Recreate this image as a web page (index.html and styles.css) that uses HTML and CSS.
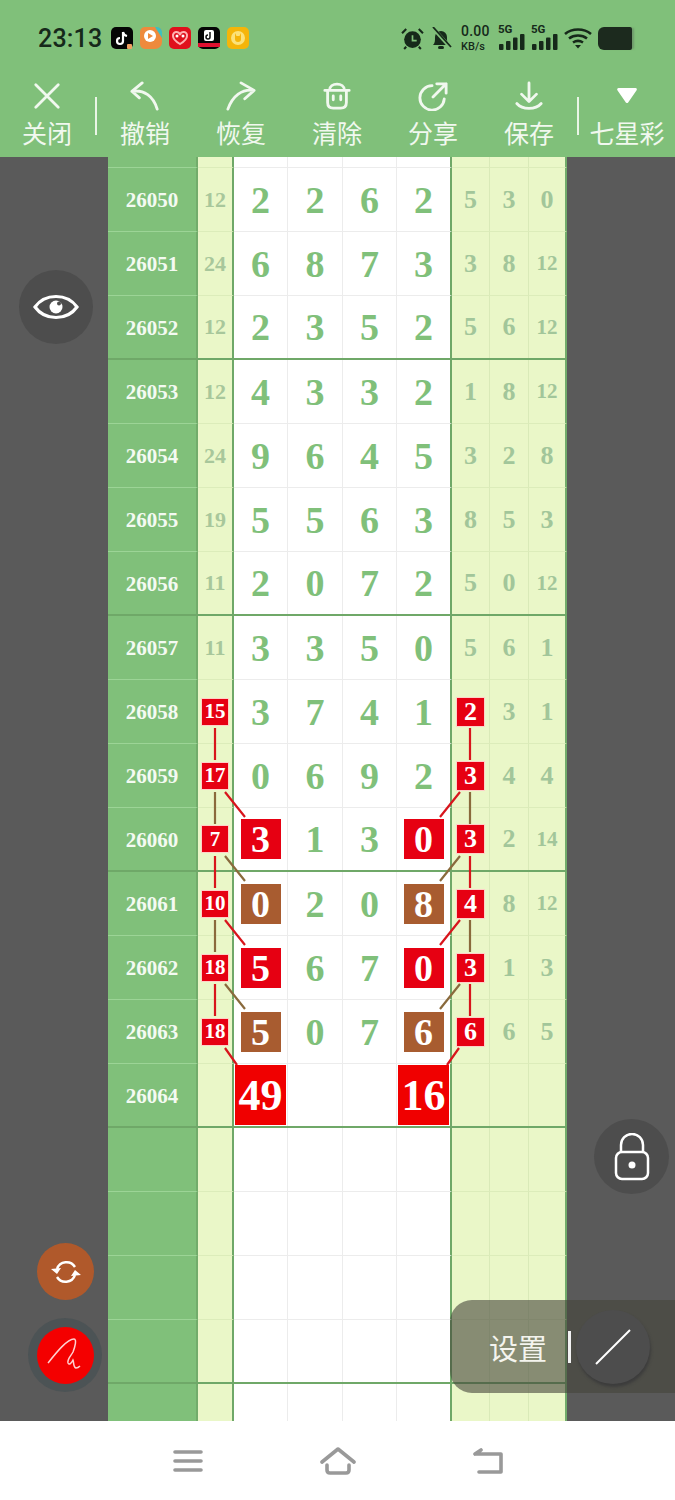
FILE: index.html
```html
<!DOCTYPE html>
<html>
<head>
<meta name="viewport" content="width=device-width, initial-scale=1.0">
<title>七星彩</title>
<link rel="stylesheet" href="styles.css">
</head>
<body>
<div class="page">

<div class="statusbar">
  <span class="time">23:13</span>
  <div class="apps">
    <svg class="app" viewBox="0 0 22 22"><rect width="22" height="22" rx="5" fill="#050505"/><path d="M12 5v9a3 3 0 1 1-3-3M12 5c.5 2.500 2 3.500 4 4" fill="none" stroke="#fff" stroke-width="2.200"/><rect x="16" y="17" width="5" height="5" rx="1" fill="#f0a060"/></svg>
    <svg class="app" viewBox="0 0 22 22"><path d="M5 0h12a5 5 0 0 1 5 5v10a7 7 0 0 1-7 7H5a5 5 0 0 1-5-5V5a5 5 0 0 1 5-5z" fill="#ee8a3c"/><path d="M15 0h2a5 5 0 0 1 5 5v6z" fill="#3cc0c0"/><circle cx="10" cy="9" r="6" fill="#fff"/><path d="M8 6l5 3-5 3z" fill="#ee8a3c"/></svg>
    <svg class="app" viewBox="0 0 22 22"><rect width="22" height="22" rx="5" fill="#e0101c"/><path d="M11 17c-5-3-7-5-7-8a3.500 3.500 0 0 1 7-1 3.500 3.500 0 0 1 7 1c0 3-2 5-7 8z" fill="none" stroke="#ffb0b0" stroke-width="2"/><circle cx="8" cy="9" r="1.500" fill="#fff"/><circle cx="14" cy="9" r="1.500" fill="#fff"/></svg>
    <svg class="app" viewBox="0 0 22 22"><rect width="22" height="22" rx="5" fill="#050505"/><rect x="6" y="3" width="10" height="11" rx="2" fill="#fff"/><path d="M12 5v5a2 2 0 1 1-2-2" fill="none" stroke="#111" stroke-width="1.500"/><rect y="16" width="22" height="4" fill="#e01030"/></svg>
    <svg class="app" viewBox="0 0 22 22"><rect width="22" height="22" rx="5" fill="#f5b50a"/><circle cx="11" cy="11" r="7" fill="#fbe27a"/><path d="M8 6v6a3 3 0 0 0 6 0V6l-1.500 3h-3z" fill="#f5b50a"/></svg>
  </div>
  <div class="sysicons">
    <svg class="sys-alarm" viewBox="0 0 22 22"><circle cx="11" cy="12" r="8" fill="#16291a"/><path d="M11 8v5h4" fill="none" stroke="#80c07a" stroke-width="1.600"/><path d="M1 6l4-4M21 6l-4-4M5 19l-2 2M17 19l2 2" stroke="#16291a" stroke-width="2"/></svg>
    <svg class="sys-bell" viewBox="0 0 22 22"><path d="M3 18c2-2 2-4 2-8a6 6 0 0 1 12 0c0 4 0 6 2 8z" fill="#16291a"/><rect x="8" y="19" width="6" height="3" rx="1.500" fill="#16291a"/><path d="M2 0l18 20" stroke="#80c07a" stroke-width="3.500"/><path d="M3 0l18 20" stroke="#16291a" stroke-width="1.800"/></svg>
    <div class="speed"><span class="speed-num">0.00</span><span class="speed-unit">KB/s</span></div>
    <div class="signal"><span class="fiveg">5G</span><svg viewBox="0 0 26 16"><rect x="0" y="10" width="4.500" height="6" rx="1"/><rect x="7" y="7" width="4.500" height="9" rx="1"/><rect x="14" y="3.500" width="4.500" height="12.500" rx="1"/><rect x="21" y="0" width="4.500" height="16" rx="1"/></svg></div>
    <div class="signal"><span class="fiveg">5G</span><svg viewBox="0 0 26 16"><rect x="0" y="10" width="4.500" height="6" rx="1"/><rect x="7" y="7" width="4.500" height="9" rx="1"/><rect x="14" y="3.500" width="4.500" height="12.500" rx="1"/><rect x="21" y="0" width="4.500" height="16" rx="1"/></svg></div>
    <svg class="sys-wifi" viewBox="0 0 28 22"><path d="M1 7c7-6 19-6 26 0M5 11.500c5-4 13-4 18 0M9 15.500c3-2 7-2 10 0" fill="none" stroke="#16291a" stroke-width="2.600"/><path d="M11 18h6l-3 3.500z" fill="#16291a"/></svg>
    <div class="battery"></div>
  </div>
</div>

<div class="toolbar">
  <div class="tool"><svg viewBox="0 0 32 32"><path d="M4 4l24 24M28 4L4 28"/></svg><span>关闭</span></div>
  <i class="tool-sep"></i>
  <div class="tool"><svg viewBox="0 0 32 32"><path d="M13 2L2 11l8 7M2 11c13-2 23 5 27 19"/></svg><span>撤销</span></div>
  <div class="tool"><svg viewBox="0 0 32 32"><path d="M16 2l14 8-10 9M30 10C17 8 7 16 2 30"/></svg><span>恢复</span></div>
  <div class="tool"><svg viewBox="0 0 32 32"><path d="M3 10h26M8 10c0-9 16-9 16 0M6 10v13c0 4 2 6 6 6h8c4 0 6-2 6-6V10M12 16v4M20 16v4"/></svg><span>清除</span></div>
  <div class="tool"><svg viewBox="0 0 32 32"><path d="M15 5A13 13 0 1 0 28 19M20 3h10v10M30 3L16 17"/></svg><span>分享</span></div>
  <div class="tool"><svg viewBox="0 0 32 32"><path d="M16 2v19M8 14l8 8 8-8M3 24c6 7 20 7 26 0"/></svg><span>保存</span></div>
  <i class="tool-sep"></i>
  <div class="tool"><svg viewBox="0 0 32 32"><path class="tri" d="M7 9h18l-9 13z"/></svg><span>七星彩</span></div>
</div>

<div class="stage">
  <div class="board">
    <svg class="lines" viewBox="0 0 459 1264">
      <g stroke-width="2.200" fill="none">
        <path class="red" d="M107 571V603M107 699V731M107 827V859"/>
        <path class="tan" d="M107 635V667M107 763V795"/>
        <path class="red" d="M362 571V603M362 699V731M362 827V859"/>
        <path class="tan" d="M362 635V667M362 763V795"/>
        <path class="red" d="M117 635L137 660M117 763L137 788M117 891L129 908"/>
        <path class="tan" d="M117 699L137 724M117 827L137 852"/>
        <path class="red" d="M352 635L332 660M352 763L332 788M351 891L339 908"/>
        <path class="tan" d="M352 699L332 724M352 827L332 852"/>
      </g>
    </svg>

    <div class="row stub"><div class="c-id"></div><div class="c-left"></div><div class="c"></div><div class="c"></div><div class="c"></div><div class="c c4"></div><div class="r"></div><div class="r"></div><div class="r r3"></div></div>

    <div class="row"><div class="c-id">26050</div><div class="c-left">12</div><div class="c">2</div><div class="c">2</div><div class="c">6</div><div class="c c4">2</div><div class="r">5</div><div class="r">3</div><div class="r r3">0</div></div>
    <div class="row"><div class="c-id">26051</div><div class="c-left">24</div><div class="c">6</div><div class="c">8</div><div class="c">7</div><div class="c c4">3</div><div class="r">3</div><div class="r">8</div><div class="r r3 two">12</div></div>
    <div class="row end"><div class="c-id">26052</div><div class="c-left">12</div><div class="c">2</div><div class="c">3</div><div class="c">5</div><div class="c c4">2</div><div class="r">5</div><div class="r">6</div><div class="r r3 two">12</div></div>

    <div class="row"><div class="c-id">26053</div><div class="c-left">12</div><div class="c">4</div><div class="c">3</div><div class="c">3</div><div class="c c4">2</div><div class="r">1</div><div class="r">8</div><div class="r r3 two">12</div></div>
    <div class="row"><div class="c-id">26054</div><div class="c-left">24</div><div class="c">9</div><div class="c">6</div><div class="c">4</div><div class="c c4">5</div><div class="r">3</div><div class="r">2</div><div class="r r3">8</div></div>
    <div class="row"><div class="c-id">26055</div><div class="c-left">19</div><div class="c">5</div><div class="c">5</div><div class="c">6</div><div class="c c4">3</div><div class="r">8</div><div class="r">5</div><div class="r r3">3</div></div>
    <div class="row end"><div class="c-id">26056</div><div class="c-left">11</div><div class="c">2</div><div class="c">0</div><div class="c">7</div><div class="c c4">2</div><div class="r">5</div><div class="r">0</div><div class="r r3 two">12</div></div>

    <div class="row"><div class="c-id">26057</div><div class="c-left">11</div><div class="c">3</div><div class="c">3</div><div class="c">5</div><div class="c c4">0</div><div class="r">5</div><div class="r">6</div><div class="r r3">1</div></div>
    <div class="row"><div class="c-id">26058</div><div class="c-left"><b class="tag">15</b></div><div class="c">3</div><div class="c">7</div><div class="c">4</div><div class="c c4">1</div><div class="r"><b class="tag wide">2</b></div><div class="r">3</div><div class="r r3">1</div></div>
    <div class="row"><div class="c-id">26059</div><div class="c-left"><b class="tag">17</b></div><div class="c">0</div><div class="c">6</div><div class="c">9</div><div class="c c4">2</div><div class="r"><b class="tag wide">3</b></div><div class="r">4</div><div class="r r3">4</div></div>
    <div class="row end"><div class="c-id">26060</div><div class="c-left"><b class="tag">7</b></div><div class="c"><b class="box">3</b></div><div class="c">1</div><div class="c">3</div><div class="c c4"><b class="box">0</b></div><div class="r"><b class="tag wide">3</b></div><div class="r">2</div><div class="r r3 two">14</div></div>

    <div class="row"><div class="c-id">26061</div><div class="c-left"><b class="tag">10</b></div><div class="c"><b class="box brown">0</b></div><div class="c">2</div><div class="c">0</div><div class="c c4"><b class="box brown">8</b></div><div class="r"><b class="tag wide">4</b></div><div class="r">8</div><div class="r r3 two">12</div></div>
    <div class="row"><div class="c-id">26062</div><div class="c-left"><b class="tag">18</b></div><div class="c"><b class="box">5</b></div><div class="c">6</div><div class="c">7</div><div class="c c4"><b class="box">0</b></div><div class="r"><b class="tag wide">3</b></div><div class="r">1</div><div class="r r3">3</div></div>
    <div class="row"><div class="c-id">26063</div><div class="c-left"><b class="tag">18</b></div><div class="c"><b class="box brown">5</b></div><div class="c">0</div><div class="c">7</div><div class="c c4"><b class="box brown">6</b></div><div class="r"><b class="tag wide">6</b></div><div class="r">6</div><div class="r r3">5</div></div>
    <div class="row end"><div class="c-id">26064</div><div class="c-left"></div><div class="c"><b class="total">49</b></div><div class="c"></div><div class="c"></div><div class="c c4"><b class="total">16</b></div><div class="r"></div><div class="r"></div><div class="r r3"></div></div>

    <div class="row"><div class="c-id"></div><div class="c-left"></div><div class="c"></div><div class="c"></div><div class="c"></div><div class="c c4"></div><div class="r"></div><div class="r"></div><div class="r r3"></div></div>
    <div class="row"><div class="c-id"></div><div class="c-left"></div><div class="c"></div><div class="c"></div><div class="c"></div><div class="c c4"></div><div class="r"></div><div class="r"></div><div class="r r3"></div></div>
    <div class="row"><div class="c-id"></div><div class="c-left"></div><div class="c"></div><div class="c"></div><div class="c"></div><div class="c c4"></div><div class="r"></div><div class="r"></div><div class="r r3"></div></div>
    <div class="row end"><div class="c-id"></div><div class="c-left"></div><div class="c"></div><div class="c"></div><div class="c"></div><div class="c c4"></div><div class="r"></div><div class="r"></div><div class="r r3"></div></div>
    <div class="row"><div class="c-id"></div><div class="c-left"></div><div class="c"></div><div class="c"></div><div class="c"></div><div class="c c4"></div><div class="r"></div><div class="r"></div><div class="r r3"></div></div>
  </div>

  <div class="fab fab-eye"><svg viewBox="0 0 46 32"><path d="M2 16C12 2 34 2 44 16 34 30 12 30 2 16z" fill="none" stroke="#fff" stroke-width="3.200"/><circle cx="23" cy="16" r="6.500" fill="#fff"/><circle cx="26" cy="12.500" r="2" fill="#4d4d4d"/></svg></div>
  <div class="fab fab-lock"><svg viewBox="0 0 36 48"><path d="M7 19v-7a11 11 0 0 1 22 0v7" fill="none" stroke="#fff" stroke-width="2.500"/><rect x="2" y="19" width="32" height="27" rx="6" fill="#4d4d4d" stroke="#fff" stroke-width="2.500"/><circle cx="18" cy="32" r="3.500" fill="#fff"/></svg></div>
  <div class="fab fab-swap"><svg viewBox="0 0 32 28"><path d="M7 11A10 10 0 0 1 25 9M25 17A10 10 0 0 1 7 19" fill="none" stroke="#fff" stroke-width="2.400"/><path d="M1 11l6 5 4-6zM31 17l-6-5-4 6z" fill="#fff"/></svg></div>
  <div class="fab fab-pen"><span class="pen-dot"><svg viewBox="0 0 36 38"><path d="M1 27C9 17 20 3 27 3c3 0 1 8-1 13-2 4-6 7-5 11 1 2 3 1 5-3 1 2 0 7 3 8 2 0 3-1 4-2" fill="none" stroke="#ffd0d0" stroke-width="1.500"/></svg></span></div>

  <div class="settings">
    <span class="settings-label">设置</span>
    <i class="settings-sep"></i>
    <div class="fab-line"><svg viewBox="0 0 38 38"><path d="M2 36L36 2" stroke="#fff" stroke-width="2"/></svg></div>
  </div>
</div>

<div class="navbar">
  <svg class="nav-menu" viewBox="0 0 30 22"><path d="M2 2h26M2 11h26M2 20h26"/></svg>
  <svg class="nav-home" viewBox="0 0 36 28"><path d="M2 15L18 2l16 13M7 18v5c0 2 1 3 3 3h16c2 0 3-1 3-3v-5"/></svg>
  <svg class="nav-back" viewBox="0 0 30 28"><path d="M2 6h26v18H6M2 6l6-4"/></svg>
</div>

</div>
</body>
</html>
```

FILE: styles.css
```css
* {box-sizing: border-box;}
html, body {margin: 0; padding: 0;}
body {font-family: "Liberation Serif", serif; background: #fff;}
.page {width: 675px; height: 1500px; display: flex; flex-direction: column; overflow: hidden;}

/* status bar */
.statusbar {height: 70px; background: #80c07a; display: flex; align-items: center; padding: 6px 0 0 38px; color: #16291a; font-family: Roboto, sans-serif;}
.time {font-size: 25px; font-weight: 500; width: 73px; letter-spacing: .2px;}
.apps {display: flex; gap: 7px;}
.app {width: 22px; height: 22px; display: block;}
.sysicons {display: flex; align-items: center; margin-left: 152px;}
.sys-alarm {width: 23px; height: 23px; margin-right: 6px;}
.sys-bell {width: 22px; height: 22px; margin-right: 9px;}
.speed {display: flex; flex-direction: column; width: 37px; font-weight: 500;}
.speed-num {font-size: 14px; line-height: 17px; letter-spacing: .2px;}
.speed-unit {font-size: 11px; line-height: 13px;}
.signal {position: relative; width: 33px; height: 24px;}
.signal svg {position: absolute; left: 1px; bottom: 0; width: 26px; height: 16px; fill: #16291a;}
.fiveg {position: absolute; left: 0; top: -4px; font-size: 11.500px; font-weight: 700;}
.sys-wifi {width: 28px; height: 22px; margin-right: 6px;}
.battery {width: 34px; height: 23px; border-radius: 6px 2px 2px 6px; background: #1c2a1e; box-shadow: 3px 0 2px -1px #6f9a6c;}

/* toolbar */
.toolbar {height: 87px; background: #80c07a; display: flex; margin-left: -1px; width: 676px;}
.tool {width: 96px; flex: none; display: flex; flex-direction: column; align-items: center; color: #f1f8ef; font-family: "Noto Sans CJK SC", "Noto Sans", sans-serif; font-size: 25px; line-height: 32px;}
.tool svg {width: 30px; height: 30px; margin-top: 11px; margin-bottom: 5px; fill: none; stroke: #f1f8ef; stroke-width: 3; stroke-linecap: round; stroke-linejoin: round;}
.tool svg .tri {fill: #fff; stroke: #fff;}
.tool-sep {width: 2px; height: 38px; margin-top: 27px; background: #eaf5e6; flex: none;}

/* main stage */
.stage {height: 1264px; background: #5a5a5a; position: relative; overflow: hidden;}
.board {width: 459px; margin-left: 108px; position: relative;}
.lines {position: absolute; left: 0; top: 0; width: 459px; height: 1264px; z-index: 1;}
.lines .red {stroke: #d8151c;}
.lines .tan {stroke: #8a6a3c;}

.row {height: 64px; display: grid; grid-template-columns: 90px 36px 54px 55px 54px 55px 38px 39px 38px;}
.row.stub {height: 11px;}
.row.end {border-bottom: 2px solid #6fa868;}
.row > div {display: flex; align-items: center; justify-content: center; font-weight: 700; border-bottom: 1px solid transparent; min-height: 0;}
.row.end > div {border-bottom: 0;}

.c-id {background: #80c07a; color: #f4faf2; font-size: 21px; padding-top: 2px; border-right: 2px solid #72ac6b; border-bottom-color: #9cd496 !important;}
.c-left {background: #eaf7c8; color: #a8c79b; font-size: 22px; border-right: 2px solid #6fa868; border-bottom-color: #dcecba !important;}
.c {background: #fff; color: #80c07a; font-size: 38px; border-right: 1px solid #ececec; border-bottom-color: #ececec !important;}
.c4 {border-right: 2px solid #6fa868;}
.r {background: #eaf7c8; color: #a2c69a; font-size: 26px; border-right: 1px solid #d9eab8; border-bottom-color: #dcecba !important;}
.r3 {border-right: 2px solid #72ac6b;}
.two {font-size: 21px;}

.tag, .box, .total {display: flex; align-items: center; justify-content: center; background: #e60012; color: #fff; position: relative; z-index: 2;}
.tag {width: 26px; height: 26px; font-size: 21px; outline: 1px solid #ffd0c8;}
.tag.wide {width: 27px; height: 28px; font-size: 26px;}
.box {width: 40px; height: 40px; font-size: 38px;}
.box.brown {background: #a85c30;}
.total {width: 51px; height: 60px; font-size: 44px; background: #f00000;}

/* floating buttons */
.fab {position: absolute; border-radius: 50%; display: flex; align-items: center; justify-content: center; z-index: 3;}
.fab-eye {left: 19px; top: 113px; width: 74px; height: 74px; background: #4d4d4d;}
.fab-eye svg {width: 46px; height: 32px;}
.fab-lock {left: 594px; top: 962px; width: 75px; height: 75px; background: #4d4d4d;}
.fab-lock svg {width: 36px; height: 48px;}
.fab-swap {left: 37px; top: 1086px; width: 57px; height: 57px; background: #b0592b;}
.fab-swap svg {width: 32px; height: 28px;}
.fab-pen {left: 28px; top: 1161px; width: 74px; height: 74px; background: #4c5355;}
.pen-dot {width: 57px; height: 57px; border-radius: 50%; background: #f40000; display: flex; align-items: center; justify-content: center;}
.pen-dot svg {width: 36px; height: 38px;}

.settings {position: absolute; left: 450px; top: 1143px; width: 225px; height: 93px; background: rgba(68, 68, 58, .6); border-radius: 22px 0 0 22px; display: flex; align-items: center; padding-left: 39px; z-index: 3;}
.settings-label {color: #f4f4ee; font-family: "Noto Sans CJK SC", "Noto Sans", sans-serif; font-size: 29px;}
.settings-sep {width: 3px; height: 32px; background: #f2f2f2; margin-left: 21px;}
.fab-line {width: 74px; height: 74px; border-radius: 50%; background: #4d4d4d; box-shadow: 1px 3px 3px #3c3c3c; margin-left: 5px; display: flex; align-items: center; justify-content: center;}
.fab-line svg {width: 38px; height: 38px;}

/* nav bar */
.navbar {height: 79px; background: #fff; position: relative; display: flex; padding-left: 173px; align-items: flex-start;}
.navbar svg {fill: none; stroke: #999; stroke-width: 3.600; stroke-linecap: round; stroke-linejoin: round; display: block;}
.nav-menu {width: 30px; height: 22px; margin-top: 29px;}
.nav-home {width: 36px; height: 28px; margin: 26px 0 0 117px;}
.nav-back {width: 30px; height: 28px; margin: 27px 0 0 117px;}
```
